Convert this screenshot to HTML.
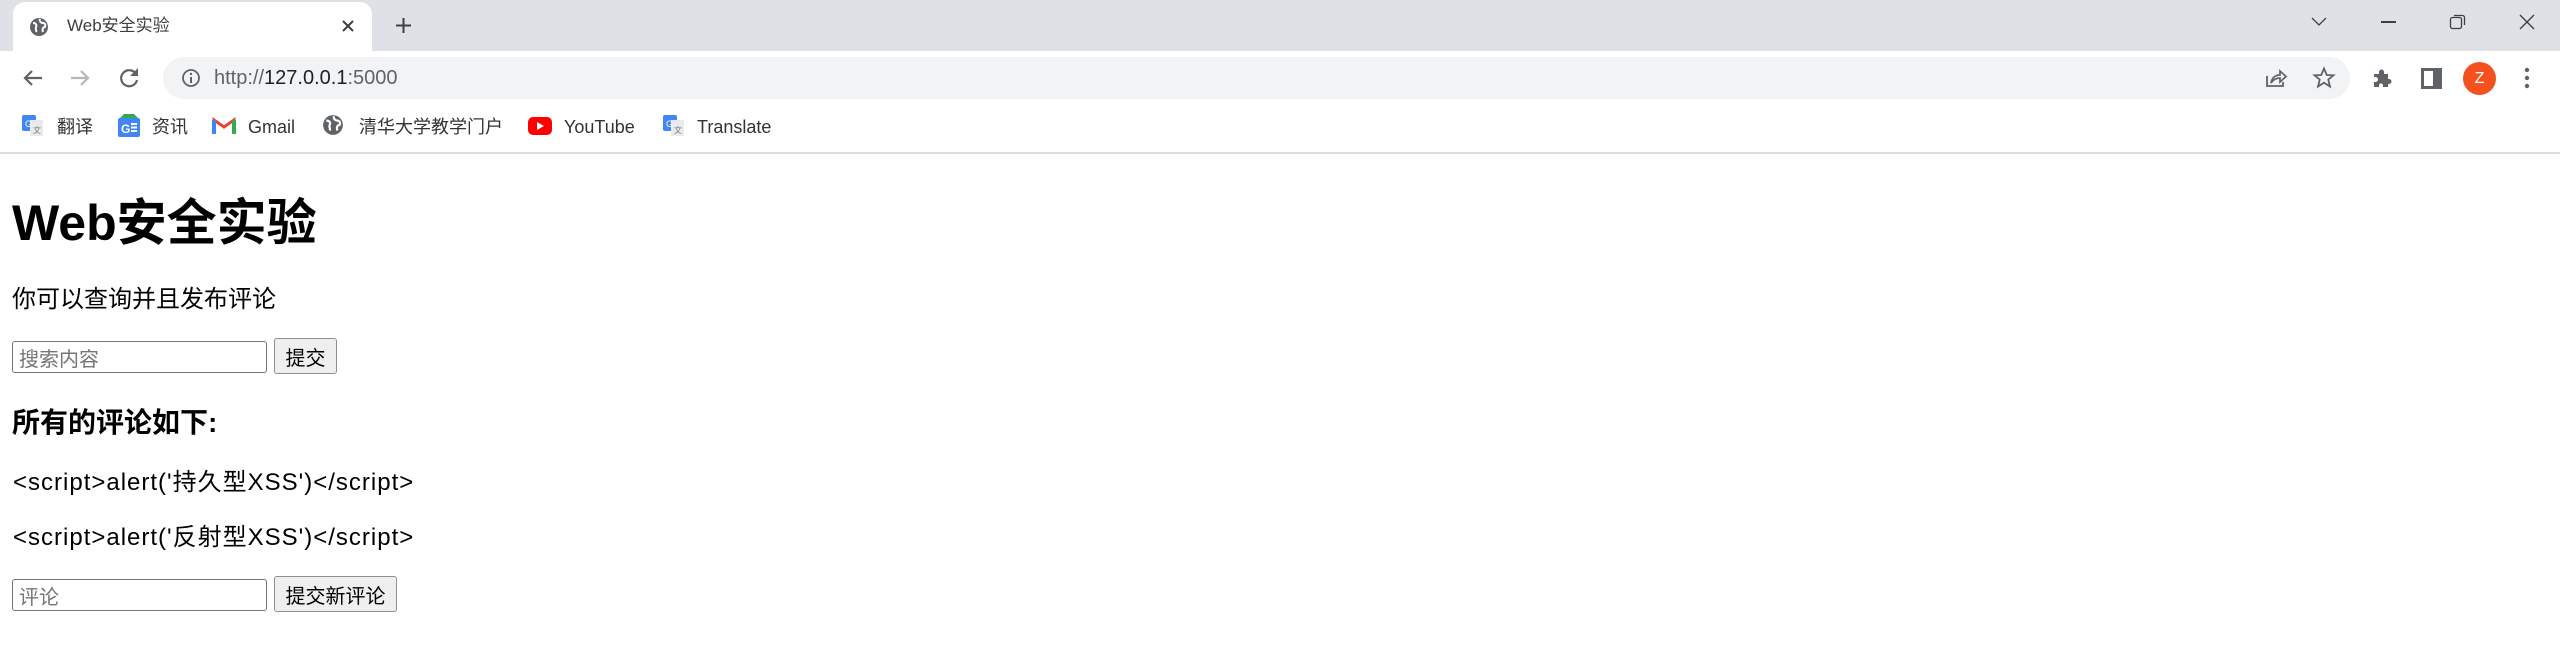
<!DOCTYPE html>
<html><head><meta charset="utf-8"><style>
*{box-sizing:border-box}
body{margin:0;width:2560px;height:651px;position:relative;overflow:hidden;background:#fff;font-family:"Liberation Sans","Noto Sans CJK SC",sans-serif}
.a{position:absolute;white-space:nowrap}
.bm{font-size:18px;color:#333;top:114px;line-height:26px}
.c{color:#000}
.inp{position:absolute;border:1px solid #767676;border-radius:3px;background:#fff;color:#757575;font-size:20px;padding-left:6px;display:flex;align-items:center}
.btn{position:absolute;border:1px solid #8f8f8f;border-radius:3px;background:#efefef;color:#000;font-size:20px;display:flex;align-items:center;justify-content:center}
</style></head><body>
<div class="a" style="left:0;top:0;width:2560px;height:51px;background:#dee1e6"></div>
<div class="a" style="left:13px;top:2px;width:359px;height:49px;background:#fff;border-radius:12px 12px 0 0"></div>
<svg class="a" style="left:29px;top:17px" width="20" height="20" viewBox="0 0 20 20"><circle cx="10" cy="10" r="9" fill="#5f6368"/><path d="M4 6c3 0 4 2 3 4s1 3 0 5M11 2c-1 2 1 4 3 4s3 2 2 4c-2 0-3 2-2 5" stroke="#fff" stroke-width="2" fill="none"/></svg>
<div class="a" style="left:67px;top:14px;font-size:17px;color:#3c4043;line-height:24px">Web安全实验</div>
<svg class="a" style="left:341px;top:19px" width="14" height="14"><path d="M2 2L12 12M12 2L2 12" stroke="#3c4043" stroke-width="2"/></svg>
<svg class="a" style="left:395px;top:17px" width="17" height="17"><path d="M8.5 1V16M1 8.5H16" stroke="#3c4043" stroke-width="2"/></svg>
<svg class="a" style="left:2310px;top:16px" width="18" height="12"><path d="M2 2L9 9L16 2" stroke="#3c4043" stroke-width="1.3" fill="none"/></svg>
<div class="a" style="left:2381px;top:21px;width:15px;height:1.5px;background:#3c4043"></div>
<svg class="a" style="left:2449px;top:13px" width="18" height="18"><rect x="1.5" y="4.5" width="11" height="11" rx="2" stroke="#3c4043" fill="none" stroke-width="1.3"/><path d="M5 2.5H13.5a2 2 0 0 1 2 2V12" stroke="#3c4043" fill="none" stroke-width="1.3"/></svg>
<svg class="a" style="left:2518px;top:13px" width="18" height="18"><path d="M2 2L16 16M16 2L2 16" stroke="#3c4043" stroke-width="1.4"/></svg>

<svg class="a" style="left:21px;top:66px" width="24" height="24"><path d="M21 12H4M11 5L4 12L11 19" stroke="#5f6368" stroke-width="2.2" fill="none"/></svg>
<svg class="a" style="left:68px;top:66px" width="24" height="24"><path d="M3 12H20M13 5L20 12L13 19" stroke="#b5b7ba" stroke-width="2.2" fill="none"/></svg>
<svg class="a" style="left:117px;top:66px" width="24" height="24"><path d="M19 8A8 8 0 1 0 20 14" stroke="#5f6368" stroke-width="2.2" fill="none"/><path d="M21 2V10H13Z" fill="#5f6368"/></svg>
<div class="a" style="left:163px;top:57px;width:2187px;height:42px;background:#f1f3f4;border-radius:21px"></div>
<svg class="a" style="left:181px;top:68px" width="20" height="20"><circle cx="10" cy="10" r="8" stroke="#5f6368" stroke-width="1.8" fill="none"/><path d="M10 9V15" stroke="#5f6368" stroke-width="2"/><circle cx="10" cy="6" r="1.2" fill="#5f6368"/></svg>
<div class="a" style="left:214px;top:64px;font-size:20px;color:#5f6368;line-height:28px">http://<span style="color:#202124">127.0.0.1</span>:5000</div>
<svg class="a" style="left:2264px;top:66px" width="24" height="24"><path d="M3 10V20H19V16" stroke="#5f6368" stroke-width="1.8" fill="none"/><path d="M7 17C8 11 12 9 16 9V5L22 10.5L16 16V12C12 12 9 14 7 17Z" stroke="#5f6368" stroke-width="1.7" fill="none"/></svg>
<svg class="a" style="left:2312px;top:66px" width="24" height="24"><path d="M12 2.5L14.8 9L21.5 9.3L16.3 13.6L18 20.5L12 16.7L6 20.5L7.7 13.6L2.5 9.3L9.2 9Z" stroke="#5f6368" stroke-width="1.8" fill="none"/></svg>
<svg class="a" style="left:2372px;top:67px" width="22" height="22"><path d="M2 7H7V5a2.5 2.5 0 0 1 5 0V7H16V12H17a2.5 2.5 0 0 1 0 5H16V20H11V18.5a2 2 0 0 0-4 0V20H2V15H3.5a2.5 2.5 0 0 0 0-5H2Z" fill="#5f6368"/></svg>
<svg class="a" style="left:2421px;top:68px" width="21" height="21"><rect x="1.5" y="1.5" width="18" height="18" stroke="#5f6368" stroke-width="3" fill="none"/><rect x="12" y="2" width="7" height="17" fill="#5f6368"/></svg>
<div class="a" style="left:2463px;top:62px;width:33px;height:33px;border-radius:50%;background:#f4511e;color:#fff;font-size:16px;text-align:center;line-height:33px">Z</div>
<svg class="a" style="left:2522px;top:67px" width="10" height="22"><circle cx="5" cy="3" r="2.2" fill="#5f6368"/><circle cx="5" cy="11" r="2.2" fill="#5f6368"/><circle cx="5" cy="19" r="2.2" fill="#5f6368"/></svg>

<svg class="a" style="left:20px;top:114px" width="26" height="24"><rect x="2" y="1" width="14" height="16" rx="2" fill="#4285f4"/><rect x="10" y="6" width="13" height="16" fill="#e8eaed"/><text x="5" y="13" font-size="9" fill="#fff" font-family="Liberation Sans">G</text><text x="13" y="19" font-size="8" fill="#777" font-family="Noto Sans CJK SC">文</text></svg>
<div class="a bm" style="left:57px">翻译</div>
<svg class="a" style="left:116px;top:113px" width="26" height="26"><path d="M4 5L8 1H18L22 5Z" fill="#34a853"/><rect x="2" y="5" width="22" height="19" rx="2" fill="#4285f4"/><text x="5" y="20" font-size="12" font-weight="bold" fill="#fff" font-family="Liberation Sans">G</text><path d="M15 11H21M15 14.5H21M15 18H21" stroke="#fff" stroke-width="2"/></svg>
<div class="a bm" style="left:152px">资讯</div>
<svg class="a" style="left:212px;top:117px" width="24" height="18"><path d="M2 17V3L12 10L22 3V17" stroke="#ea4335" stroke-width="3" fill="none"/><path d="M2 17V3" stroke="#4285f4" stroke-width="4"/><path d="M22 17V3" stroke="#34a853" stroke-width="4"/></svg>
<div class="a bm" style="left:248px">Gmail</div>
<svg class="a" style="left:322px;top:114px" width="22" height="22" viewBox="0 0 20 20"><circle cx="10" cy="10" r="9" fill="#5f6368"/><path d="M4 6c3 0 4 2 3 4s1 3 0 5M11 2c-1 2 1 4 3 4s3 2 2 4c-2 0-3 2-2 5" stroke="#fff" stroke-width="2" fill="none"/></svg>
<div class="a bm" style="left:359px">清华大学教学门户</div>
<svg class="a" style="left:528px;top:117px" width="24" height="18"><rect x="0" y="0" width="24" height="18" rx="5" fill="#f00"/><path d="M9 5V13L16 9Z" fill="#fff"/></svg>
<div class="a bm" style="left:564px">YouTube</div>
<svg class="a" style="left:661px;top:114px" width="26" height="24"><rect x="2" y="1" width="14" height="16" rx="2" fill="#4285f4"/><rect x="10" y="6" width="13" height="16" fill="#e8eaed"/><text x="5" y="13" font-size="9" fill="#fff" font-family="Liberation Sans">G</text><text x="13" y="19" font-size="8" fill="#777" font-family="Noto Sans CJK SC">文</text></svg>
<div class="a bm" style="left:697px">Translate</div>
<div class="a" style="left:0;top:152px;width:2560px;height:2px;background:#dadce0"></div>

<div class="a c" style="left:12px;top:190px;font-size:50px;font-weight:bold;line-height:66px">Web安全实验</div>
<div class="a c" style="left:12px;top:284px;font-size:24px;line-height:32px">你可以查询并且发布评论</div>
<div class="inp" style="left:12px;top:341px;width:255px;height:32px">搜索内容</div>
<div class="btn" style="left:274px;top:338px;width:63px;height:36px">提交</div>
<div class="a c" style="left:12px;top:404px;font-size:28px;font-weight:bold;line-height:38px">所有的评论如下:</div>
<div class="a c" style="left:13px;top:466px;font-size:24px;line-height:34px;letter-spacing:1px">&lt;script&gt;alert('持久型XSS')&lt;/script&gt;</div>
<div class="a c" style="left:13px;top:521px;font-size:24px;line-height:34px;letter-spacing:1px">&lt;script&gt;alert('反射型XSS')&lt;/script&gt;</div>
<div class="inp" style="left:12px;top:579px;width:255px;height:32px">评论</div>
<div class="btn" style="left:274px;top:576px;width:123px;height:36px">提交新评论</div>
</body></html>
